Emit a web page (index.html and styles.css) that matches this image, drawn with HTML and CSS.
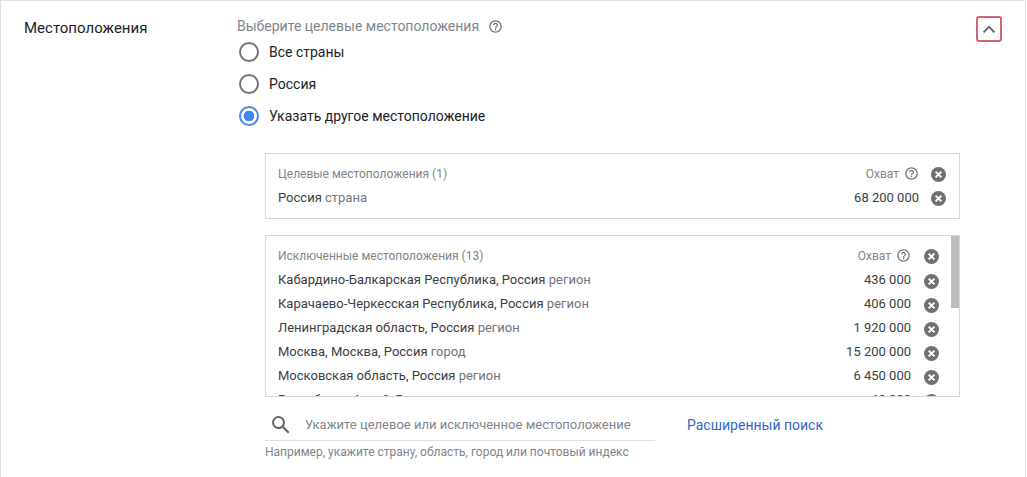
FILE: index.html
```html
<!DOCTYPE html>
<html lang="ru">
<head>
<meta charset="utf-8">
<title>Местоположения</title>
<link rel="stylesheet" href="styles.css">
</head>
<body>
<svg class="defs" width="0" height="0" aria-hidden="true">
  <symbol id="help" viewBox="0 0 24 24"><path fill="#6f7175" d="M11 18h2v-2h-2v2zm1-16C6.48 2 2 6.48 2 12s4.48 10 10 10 10-4.48 10-10S17.52 2 12 2zm0 18c-4.41 0-8-3.59-8-8s3.59-8 8-8 8 3.59 8 8-3.59 8-8 8zm0-14c-2.21 0-4 1.79-4 4h2c0-1.1.9-2 2-2s2 .9 2 2c0 2-3 1.75-3 5h2c0-2.25 3-2.5 3-5 0-2.21-1.79-4-4-4z"/></symbol>
  <symbol id="cancel" viewBox="0 0 24 24"><circle cx="12" cy="12" r="12" fill="#6f7175"/><path d="M7.4 7.4l9.2 9.2M16.6 7.4l-9.2 9.2" stroke="#fff" stroke-width="3.2" fill="none"/></symbol>
</svg>
<main class="panel">
  <h2 class="title">Местоположения</h2>
  <div class="content">
    <div class="prompt">Выберите целевые местоположения <svg class="help help-big"><use href="#help"/></svg></div>
    <div class="radios">
      <div class="radio-row"><span class="radio"></span>Все страны</div>
      <div class="radio-row"><span class="radio"></span>Россия</div>
      <div class="radio-row"><span class="radio checked"></span>Указать другое местоположение</div>
    </div>
    <section class="box box-target">
      <div class="row head"><span class="name">Целевые местоположения (1)</span><span class="reach">Охват <svg class="help"><use href="#help"/></svg></span><svg class="x"><use href="#cancel"/></svg></div>
      <div class="row"><span class="name">Россия <em>страна</em></span><span class="reach">68 200 000</span><svg class="x"><use href="#cancel"/></svg></div>
    </section>
    <section class="box box-excluded">
      <div class="scroll-thumb"></div>
      <div class="row head"><span class="name">Исключенные местоположения (13)</span><span class="reach">Охват <svg class="help"><use href="#help"/></svg></span><svg class="x"><use href="#cancel"/></svg></div>
      <div class="row"><span class="name">Кабардино-Балкарская Республика, Россия <em>регион</em></span><span class="reach">436 000</span><svg class="x"><use href="#cancel"/></svg></div>
      <div class="row"><span class="name">Карачаево-Черкесская Республика, Россия <em>регион</em></span><span class="reach">406 000</span><svg class="x"><use href="#cancel"/></svg></div>
      <div class="row"><span class="name">Ленинградская область, Россия <em>регион</em></span><span class="reach">1 920 000</span><svg class="x"><use href="#cancel"/></svg></div>
      <div class="row"><span class="name">Москва, Москва, Россия <em>город</em></span><span class="reach">15 200 000</span><svg class="x"><use href="#cancel"/></svg></div>
      <div class="row"><span class="name">Московская область, Россия <em>регион</em></span><span class="reach">6 450 000</span><svg class="x"><use href="#cancel"/></svg></div>
      <div class="row"><span class="name">Республика Алтай, Россия <em>регион</em></span><span class="reach">60 000</span><svg class="x"><use href="#cancel"/></svg></div>
    </section>
    <div class="search-row">
      <div class="search">
        <svg class="search-icon" viewBox="0 0 24 24"><path fill="#5f6368" d="M15.5 14h-.79l-.28-.27A6.47 6.47 0 0 0 16 9.5 6.5 6.5 0 1 0 9.5 16c1.61 0 3.09-.59 4.23-1.57l.27.28v.79l5 4.99L20.49 19l-4.99-5zm-6 0C7.01 14 5 11.99 5 9.5S7.01 5 9.5 5 14 7.01 14 9.5 11.99 14 9.5 14z"/></svg>
        <span>Укажите целевое или исключенное местоположение</span>
      </div>
      <a class="advanced">Расширенный поиск</a>
    </div>
    <div class="hint">Например, укажите страну, область, город или почтовый индекс</div>
  </div>
  <button class="collapse" aria-label="Свернуть"><svg viewBox="0 0 24 24"><path fill="none" stroke="#5f6368" stroke-width="2.2" d="M5.5 16l6.5-6.5 6.5 6.5"/></svg></button>
</main>
</body>
</html>
```
FILE: styles.css
```css
* { box-sizing: border-box; }
html, body { margin: 0; height: 100%; }
body { background: #fff; font-family: Roboto, "Liberation Sans", sans-serif; overflow: hidden; }
.defs { position: absolute; }
.panel { position: relative; display: flex; width: 1026px; height: 477px; border-left: 1px solid #e0e0e0; border-right: 1px solid #e0e0e0; border-top: 1px solid #e0e0e0; }
.title { margin: 0; width: 235px; padding: 17px 0 0 23px; font-size: 15px; line-height: 20px; font-weight: 400; color: #202124; }
.content { width: 724px; padding-top: 16px; }
.prompt { display: flex; align-items: center; gap: 9px; padding-left: 1px; font-size: 14px; line-height: 18px; color: #80868b; }
.help { width: 15px; height: 15px; }
.help-big { width: 15px; height: 15px; }
.radios { margin-top: 1px; }
.radio-row { display: flex; align-items: center; height: 32px; font-size: 14px; color: #202124; }
.radio { width: 20px; height: 20px; margin: 0 10px 0 3px; border: 2px solid #6f7175; border-radius: 50%; }
.radio.checked { border-color: #4285f4; background: radial-gradient(circle, #4285f4 0 5px, transparent 5.6px); }
.box { position: relative; border: 1px solid #d6d6d6; overflow: hidden; margin-left: 29px; width: 695px; }
.box-target { height: 66px; margin-top: 21px; padding: 8px 12px 0; }
.box-excluded { height: 162px; margin-top: 16px; padding: 8px 12px 0; }
.row { display: flex; align-items: center; height: 24px; font-size: 13px; color: #3c4043; }
.row.head { height: 23px; font-size: 12px; color: #80868b; }
.name { flex: 1; }
.name em { font-style: normal; color: #70757a; }
.reach { display: flex; align-items: center; gap: 5px; }
.x { width: 15px; height: 15px; margin-left: 12px; margin-top: 2px; margin-right: 1px; }
.box-excluded .x { margin-top: 4px; margin-left: 13px; }
.box-excluded .head .x { margin-top: 2px; }
.box-excluded .row { padding-right: 12px; margin-right: -5px; }
.scroll-thumb { position: absolute; top: 0; right: 0; width: 8px; height: 72px; background: #bdbdbd; }
.search-row { display: flex; align-items: flex-end; margin-left: 29px; height: 44px; }
.search { display: flex; align-items: center; width: 390px; height: 44px; border-bottom: 1px solid #e0e0e0; padding: 12px 0 0 4px; font-size: 13px; color: #80868b; }
.search-icon { width: 24px; height: 24px; margin-right: 12px; }
.advanced { align-self: center; margin: 12px 0 0 32px; font-size: 14px; color: #3367c7; }
.hint { margin: 3px 0 0 29px; font-size: 12px; line-height: 16px; color: #80868b; }
.collapse { position: absolute; top: 15px; left: 975px; width: 26px; height: 26px; padding: 1px; background: #fff; border: 2px solid #cf6670; border-radius: 3px; }
.collapse svg { display: block; width: 100%; height: 100%; }
```
